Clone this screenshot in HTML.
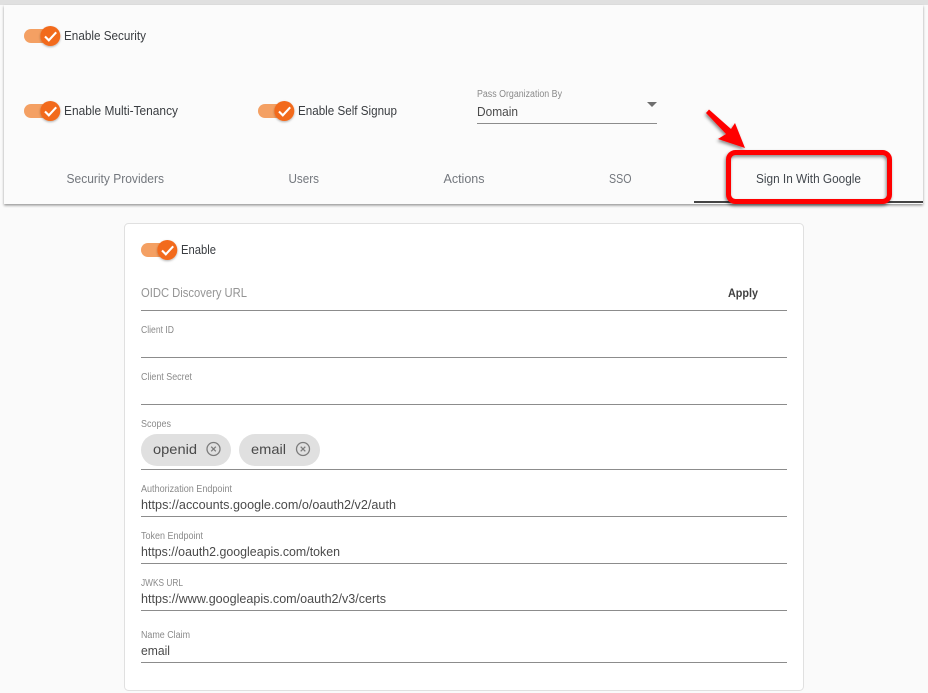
<!DOCTYPE html>
<html lang="en">
<head>
<meta charset="utf-8">
<title>Sign In With Google</title>
<style>
html,body{margin:0;padding:0;background:#fafafa;width:928px;height:693px;overflow:hidden}
svg{display:block}
text{font-family:"Liberation Sans",sans-serif;white-space:pre}
.lab{font-size:13px;fill:#3a3d41}
.tab{font-size:12.5px;fill:#73777d}
.tiny{font-size:10px;fill:#8a8a8a}
.val{font-size:13px;fill:#4a4a4a}
.line{stroke:#8c8c8c;stroke-width:1}
</style>
</head>
<body>
<svg width="928" height="693" viewBox="0 0 928 693" xmlns="http://www.w3.org/2000/svg">
<defs>
<filter id="sh" x="-20%" y="-20%" width="140%" height="140%"><feDropShadow dx="0" dy="1.5" stdDeviation="1.2" flood-color="#000" flood-opacity=".4"/></filter>
<filter id="ks" x="-40%" y="-40%" width="180%" height="180%"><feDropShadow dx="0" dy="1" stdDeviation="1" flood-color="#000" flood-opacity=".3"/></filter>
<filter id="as" x="-30%" y="-30%" width="160%" height="160%"><feDropShadow dx="-1" dy="2" stdDeviation="1.5" flood-color="#000" flood-opacity=".45"/></filter>
<g id="tg">
<rect x="0" y="-7" width="34" height="14" rx="7" fill="#f4a063"/>
<circle cx="26.3" cy="0" r="10" fill="#f26b1d" filter="url(#ks)"/>
<path d="M21 0.5l3.800 3.800 7.400-8" fill="none" stroke="#fff" stroke-width="2.100"/>
</g>
<g id="x">
<circle r="6.500" fill="none" stroke="#7c7c7c" stroke-width="1.300"/>
<path d="M-2.300-2.300L2.300 2.300M2.300-2.300L-2.300 2.300" stroke="#7c7c7c" stroke-width="1.300"/>
</g>
</defs>

<rect width="928" height="693" fill="#fafafa"/>
<rect width="928" height="5" fill="#e0e0e0"/>
<rect x="4" y="5" width="919" height="199" fill="#fbfbfb" filter="url(#sh)"/>

<use href="#tg" x="24" y="36"/>
<text class="lab" x="64" y="40" textLength="82" lengthAdjust="spacingAndGlyphs">Enable Security</text>
<use href="#tg" x="24" y="111"/>
<text class="lab" x="64" y="115" textLength="114" lengthAdjust="spacingAndGlyphs">Enable Multi-Tenancy</text>
<use href="#tg" x="258" y="111"/>
<text class="lab" x="298" y="115" textLength="99" lengthAdjust="spacingAndGlyphs">Enable Self Signup</text>

<text class="tiny" x="477" y="97" textLength="85" lengthAdjust="spacingAndGlyphs">Pass Organization By</text>
<text class="val" x="477" y="116" textLength="41" lengthAdjust="spacingAndGlyphs">Domain</text>
<path d="M647 102h10l-5 5z" fill="#6e6e6e"/>
<line class="line" x1="477" y1="123.500" x2="657" y2="123.500"/>

<text class="tab" x="66.500" y="183" textLength="97.500" lengthAdjust="spacingAndGlyphs">Security Providers</text>
<text class="tab" x="288.500" y="183" textLength="30.500" lengthAdjust="spacingAndGlyphs">Users</text>
<text class="tab" x="443.500" y="183" textLength="41" lengthAdjust="spacingAndGlyphs">Actions</text>
<text class="tab" x="609" y="183" textLength="22.500" lengthAdjust="spacingAndGlyphs">SSO</text>
<text class="tab" x="756" y="183" textLength="105" lengthAdjust="spacingAndGlyphs" style="fill:#43484e">Sign In With Google</text>
<rect x="694" y="201" width="229" height="2" fill="#444"/>

<g filter="url(#as)">
<rect x="728.500" y="152.500" width="161" height="49" rx="7" fill="none" stroke="#ff0000" stroke-width="5"/>
<path d="M706 113L709 109.500L731 129L735 123L745 148L718 139L726 134Z" fill="#ff0000"/>
</g>

<rect x="124.500" y="223.500" width="679" height="467" rx="4" fill="#fff" stroke="#e0e0e0"/>

<use href="#tg" x="141" y="250"/>
<text class="lab" x="181" y="254" textLength="35" lengthAdjust="spacingAndGlyphs">Enable</text>

<text class="val" x="141" y="297" textLength="106" lengthAdjust="spacingAndGlyphs" style="fill:#949494">OIDC Discovery URL</text>
<text x="728" y="297" font-size="12" font-weight="700" fill="#404040" textLength="30" lengthAdjust="spacingAndGlyphs">Apply</text>
<line class="line" x1="141" y1="310.500" x2="787" y2="310.500"/>

<text class="tiny" x="141" y="333" textLength="33" lengthAdjust="spacingAndGlyphs">Client ID</text>
<line class="line" x1="141" y1="357.500" x2="787" y2="357.500"/>

<text class="tiny" x="141" y="380" textLength="51" lengthAdjust="spacingAndGlyphs">Client Secret</text>
<line class="line" x1="141" y1="404.500" x2="787" y2="404.500"/>

<text class="tiny" x="141" y="427" textLength="30" lengthAdjust="spacingAndGlyphs">Scopes</text>
<rect x="141" y="434" width="90" height="32" rx="16" fill="#e0e0e0"/>
<text x="153" y="454" font-size="14" fill="#4a4a4a" textLength="44" lengthAdjust="spacingAndGlyphs">openid</text>
<use href="#x" x="213.500" y="449"/>
<rect x="239" y="434" width="81" height="32" rx="16" fill="#e0e0e0"/>
<text x="251" y="454" font-size="14" fill="#4a4a4a" textLength="35" lengthAdjust="spacingAndGlyphs">email</text>
<use href="#x" x="303" y="449"/>
<line class="line" x1="141" y1="469.500" x2="787" y2="469.500"/>

<text class="tiny" x="141" y="492" textLength="91" lengthAdjust="spacingAndGlyphs">Authorization Endpoint</text>
<text class="val" x="141" y="509" textLength="255" lengthAdjust="spacingAndGlyphs">https://accounts.google.com/o/oauth2/v2/auth</text>
<line class="line" x1="141" y1="516.500" x2="787" y2="516.500"/>

<text class="tiny" x="141" y="539" textLength="62" lengthAdjust="spacingAndGlyphs">Token Endpoint</text>
<text class="val" x="141" y="556" textLength="199" lengthAdjust="spacingAndGlyphs">https://oauth2.googleapis.com/token</text>
<line class="line" x1="141" y1="563.500" x2="787" y2="563.500"/>

<text class="tiny" x="141" y="586" textLength="42" lengthAdjust="spacingAndGlyphs">JWKS URL</text>
<text class="val" x="141" y="603" textLength="245" lengthAdjust="spacingAndGlyphs">https://www.googleapis.com/oauth2/v3/certs</text>
<line class="line" x1="141" y1="610.500" x2="787" y2="610.500"/>

<text class="tiny" x="141" y="638" textLength="49" lengthAdjust="spacingAndGlyphs">Name Claim</text>
<text class="val" x="141" y="655" textLength="29" lengthAdjust="spacingAndGlyphs">email</text>
<line class="line" x1="141" y1="662.500" x2="787" y2="662.500"/>
</svg>
</body>
</html>
